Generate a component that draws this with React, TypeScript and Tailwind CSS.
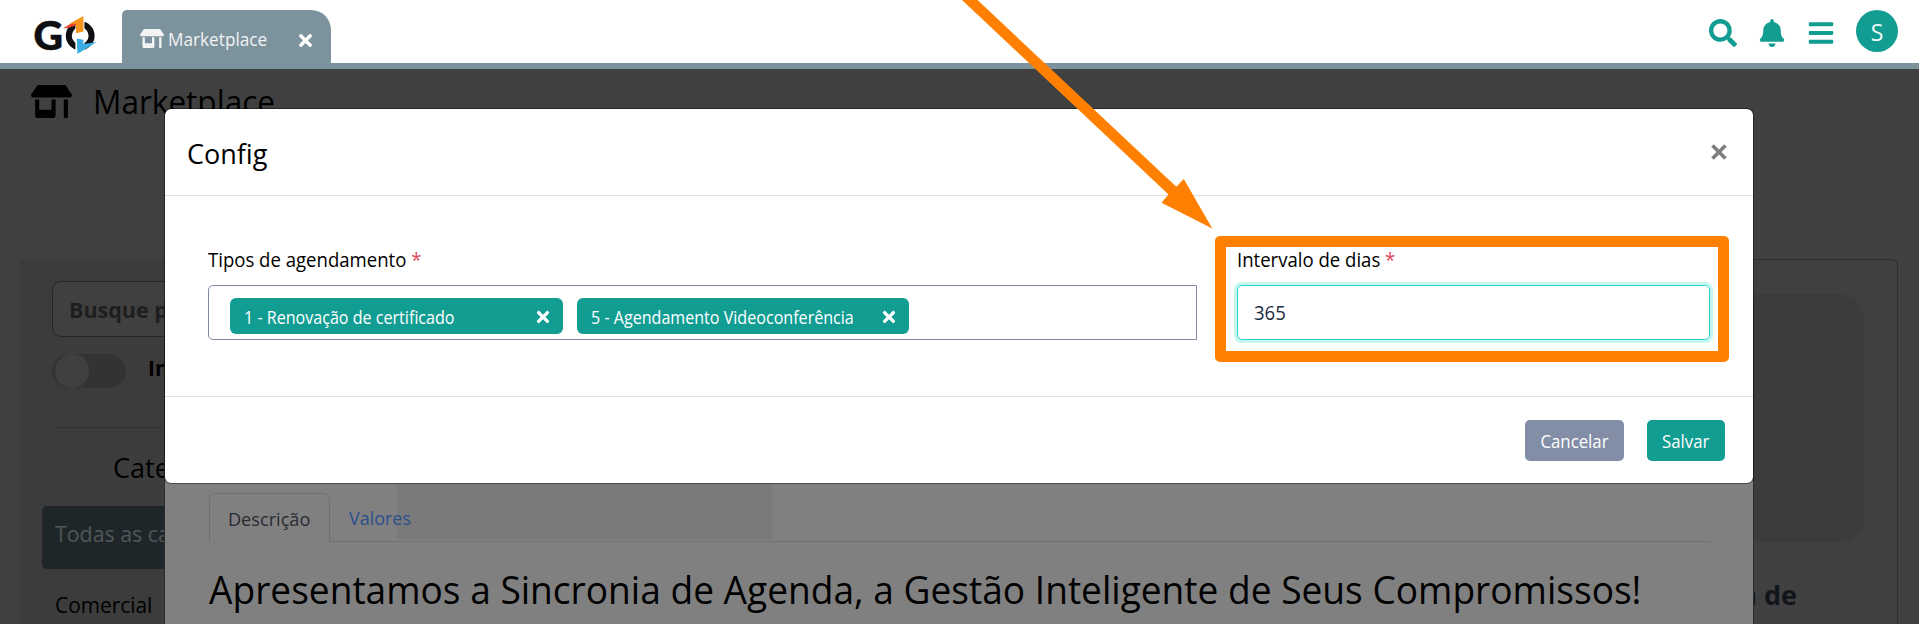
import React from 'react';
import { FaBars, FaBell, FaSearch, FaStoreAlt, FaTimes } from 'react-icons/fa';

function Logo() {
  return (
    <svg className="h-[46px] w-[64px] shrink-0 overflow-visible" viewBox="0 0 64 46">
      <text
        x="-1.6"
        y="35"
        fontFamily="Lato"
        fontWeight="900"
        fontSize="39.5"
        textLength="29.5"
        lengthAdjust="spacingAndGlyphs"
        fill="#0d0f12"
        stroke="#0d0f12"
        strokeWidth="0.6"
      >
        G
      </text>
      <circle cx="45.2" cy="20.7" r="11.4" fill="none" stroke="#0d0f12" strokeWidth="6" />
      <path d="M40.4 3h9v35h-9z" fill="#fff" />
      <path d="M28 13.2 42 5v5L33.5 13z" fill="#e8472b" />
      <path d="M34.5 8.8 48.4 1v15.6L41 18.2V8.8z" fill="#f7941e" />
      <path d="M41.8 23.4 48.4 24.8v4.2l13.4-2L42.4 39z" fill="#3aaee3" />
    </svg>
  );
}

function Header() {
  return (
    <header className="flex h-[69px] items-start border-b-[6px] border-[#7c929d] bg-white">
      <div className="pl-[35px] pt-[15px]">
        <Logo />
      </div>
      <div className="ml-[23px] mt-[10px] flex h-[53px] w-[209px] items-center rounded-tl-[5px] rounded-tr-[20px] bg-[#7c929d] pl-[18px] pr-[18px] pb-[3px] text-[#f3f3f3]">
        <FaStoreAlt className="mt-[6px] h-[19px] w-[24px] shrink-0" />
        <span className="ml-[4px] mt-[8px] w-[98px] origin-left scale-x-[0.93] text-[18.5px] leading-[24px]">Marketplace</span>
        <FaTimes className="ml-auto mt-[10px] h-[19px] w-[15px] shrink-0 text-white" />
      </div>
      <div className="ml-auto flex items-center gap-[21px] pr-[21px] pt-[10px] text-[#129d93]">
        <FaSearch className="mt-[3px] h-[28px] w-[28px]" />
        <FaBell className="mt-[3px] h-[28px] w-[28px]" />
        <FaBars className="mt-[3px] h-[28px] w-[28px]" />
        <div className="flex h-[42px] w-[42px] items-center justify-center rounded-full bg-[#129d93] pt-[3px] text-[23px] leading-none text-[#eefafa]">
          S
        </div>
      </div>
    </header>
  );
}

function Sidebar() {
  return (
    <aside className="ml-[20px] h-[365px] w-[380px] shrink-0 bg-[#3c3c3c] pt-[22px]">
      <div className="ml-[32px] flex h-[56px] items-center rounded-[9px] border border-[#22272d] bg-[#404040] pl-[16px] pt-[2px] text-[21.5px] font-bold text-[#1c1e20]">
        Busque por
      </div>
      <div className="ml-[32px] mt-[17px] flex h-[34px] items-center">
        <div className="h-[34px] w-[74px] rounded-full bg-[#333333] pl-[3px]">
          <div className="h-[34px] w-[34px] rounded-full bg-[#404040]" />
        </div>
        <span className="ml-[22px] -mt-[4px] text-[21px] font-bold text-black">Instalados</span>
      </div>
      <div className="ml-[32px] mt-[39px] h-px bg-[#323232]" />
      <h3 className="ml-[93px] mt-[20px] text-[27px] leading-[40px] text-black">Categorias</h3>
      <div className="ml-[22px] mt-[18px] flex h-[63px] items-center rounded-[5px] bg-[#1f2629] pb-[9px] pl-[13px] text-[22px] text-[#515658]">
        <span className="origin-left scale-x-[0.97]">Todas as categorias</span>
      </div>
      <div className="ml-[35px] mt-[20px] w-fit origin-left scale-x-[0.97] text-[21.5px] leading-[32px] text-black">Comercial</div>
    </aside>
  );
}

function Backdrop() {
  return (
    <main className="h-[555px] overflow-hidden bg-[#404040]">
      <div className="flex h-[190px] items-start">
        <FaStoreAlt className="ml-[31px] mt-[16px] h-[33px] w-[41px] text-black" />
        <h1 className="ml-[21px] mt-[10px] origin-left scale-x-[0.942] text-[33.5px] leading-[44px] text-black">Marketplace</h1>
      </div>
      <div className="flex">
        <Sidebar />
        <section className="mr-[21px] h-[420px] flex-1 rounded-tr-[6px] border-r border-t border-[#2d2d2d] pt-[34px]">
          <div className="mr-[33px] h-[248px] rounded-r-[24px] bg-[#3c3c3c]" />
          <p className="mr-[100px] mt-[33px] text-right text-[27px] font-bold leading-[40px] text-[#11151a]">Agenda de</p>
        </section>
      </div>
    </main>
  );
}

function AppDialog() {
  return (
    <div className="absolute left-[164px] top-[300px] h-[324px] w-[1590px] border-x border-[#2c2c2c] bg-[#808080] pt-[183px]">
      <div className="ml-[44px] mr-[43px] flex h-[59px] items-end border-b border-[#707070] bg-[linear-gradient(#7a7a7a,#7a7a7a)] bg-[length:375px_56px] bg-[position:188px_0] bg-no-repeat">
        <div className="-mb-px flex h-[49px] w-[121px] items-center justify-center rounded-t-[6px] border border-b-0 border-[#707070] bg-[#808080] pt-[3px] text-[19px] text-[#282c33]">
          <span className="scale-x-[0.955]">Descrição</span>
        </div>
        <div className="flex h-[49px] items-center pl-[19px] pt-[3px] text-[19px] text-[#2b4f8c]">
          <span className="origin-left scale-x-[0.945]">Valores</span>
        </div>
      </div>
      <h2 className="ml-[44px] mt-[20px] w-fit origin-left scale-x-[0.951] whitespace-nowrap text-[39px] leading-[54px] text-black">
        Apresentamos a Sincronia de Agenda, a Gestão Inteligente de Seus Compromissos!
      </h2>
    </div>
  );
}

function Label({ children }: { children: string }) {
  return (
    <label className="block h-[28px] w-fit origin-left scale-x-[0.952] text-[19.5px] leading-[28px] text-black">
      {children} <span className="text-[#e0455a]">*</span>
    </label>
  );
}

function Tag({ children, className }: { children: string; className: string }) {
  return (
    <div className={`flex h-[36px] items-center justify-between rounded-[6px] bg-[#129d93] pl-[14px] pr-[13px] text-[17.3px] text-white ${className}`}>
      <span className="mt-[3px] origin-left scale-x-[0.931]">{children}</span>
      <FaTimes className="mt-[2px] h-[18px] w-[14px] shrink-0" />
    </div>
  );
}

function ConfigModal() {
  return (
    <div className="absolute left-[164px] top-[108px] flex h-[376px] w-[1590px] flex-col rounded-[7px] border border-black/40 bg-white bg-clip-padding">
      <div className="flex h-[87px] items-center border-b border-[#dee2e6] pl-[22px] pr-[26px]">
        <h2 className="mt-[4px] text-[27px] leading-[36px] text-black">Config</h2>
        <svg className="ml-auto h-[16px] w-[16px]" viewBox="0 0 16 16" stroke="#808080" strokeWidth="3.8">
          <path d="M1.5 1.5 14.5 14.5M14.5 1.5 1.5 14.5" />
        </svg>
      </div>
      <div className="flex h-[200px] items-start pl-[43px] pr-[43px] pt-[50px]">
        <div className="w-[989px]">
          <Label>Tipos de agendamento</Label>
          <div className="mt-[11px] flex h-[55px] gap-[14px] rounded-l-[5px] border border-[#7f8a9f] pl-[21px] pt-[12px]">
            <Tag className="w-[333px]">1 - Renovação de certificado</Tag>
            <Tag className="w-[332px]">5 - Agendamento Videoconferência</Tag>
          </div>
        </div>
        <div className="ml-[40px] w-[473px]">
          <Label>Intervalo de dias</Label>
          <div className="mt-[11px] flex h-[55px] items-center rounded-[5px] border border-[#26d5ca] pl-[16px] text-[19.5px] text-[#1c2d41] shadow-[0_0_0_3px_#c6f5f1]">
            <span className="origin-left scale-x-[0.95]">365</span>
          </div>
        </div>
      </div>
      <div className="flex flex-1 items-start justify-end gap-[23px] border-t border-[#dee2e6] pr-[28px] pt-[23px] text-[17.5px] text-white">
        <button className="h-[41px] w-[99px] rounded-[5px] bg-[#828ea6] pt-[2px]">
          <span className="inline-block scale-x-[0.96]">Cancelar</span>
        </button>
        <button className="h-[41px] w-[78px] rounded-[5px] bg-[#129d93] pt-[2px]">
          <span className="inline-block scale-x-[0.96]">Salvar</span>
        </button>
      </div>
    </div>
  );
}

function Annotation() {
  return (
    <>
      <div className="absolute left-[1215px] top-[236px] h-[126px] w-[514px] rounded-[5px] border-[11px] border-[#ff8000]" />
      <svg className="absolute left-0 top-0 h-[240px] w-[1300px]" viewBox="0 0 1300 240">
        <path d="M962 0H977.5L1176.3 186.7L1183.8 179L1212.3 228.5L1161.5 202.8L1168.5 194.5Z" fill="#ff8000" />
      </svg>
    </>
  );
}

export default function App() {
  return (
    <div className="relative h-[624px] w-[1919px] overflow-hidden font-['Open_Sans','Noto_Sans',sans-serif]">
      <Header />
      <Backdrop />
      <AppDialog />
      <ConfigModal />
      <Annotation />
    </div>
  );
}
